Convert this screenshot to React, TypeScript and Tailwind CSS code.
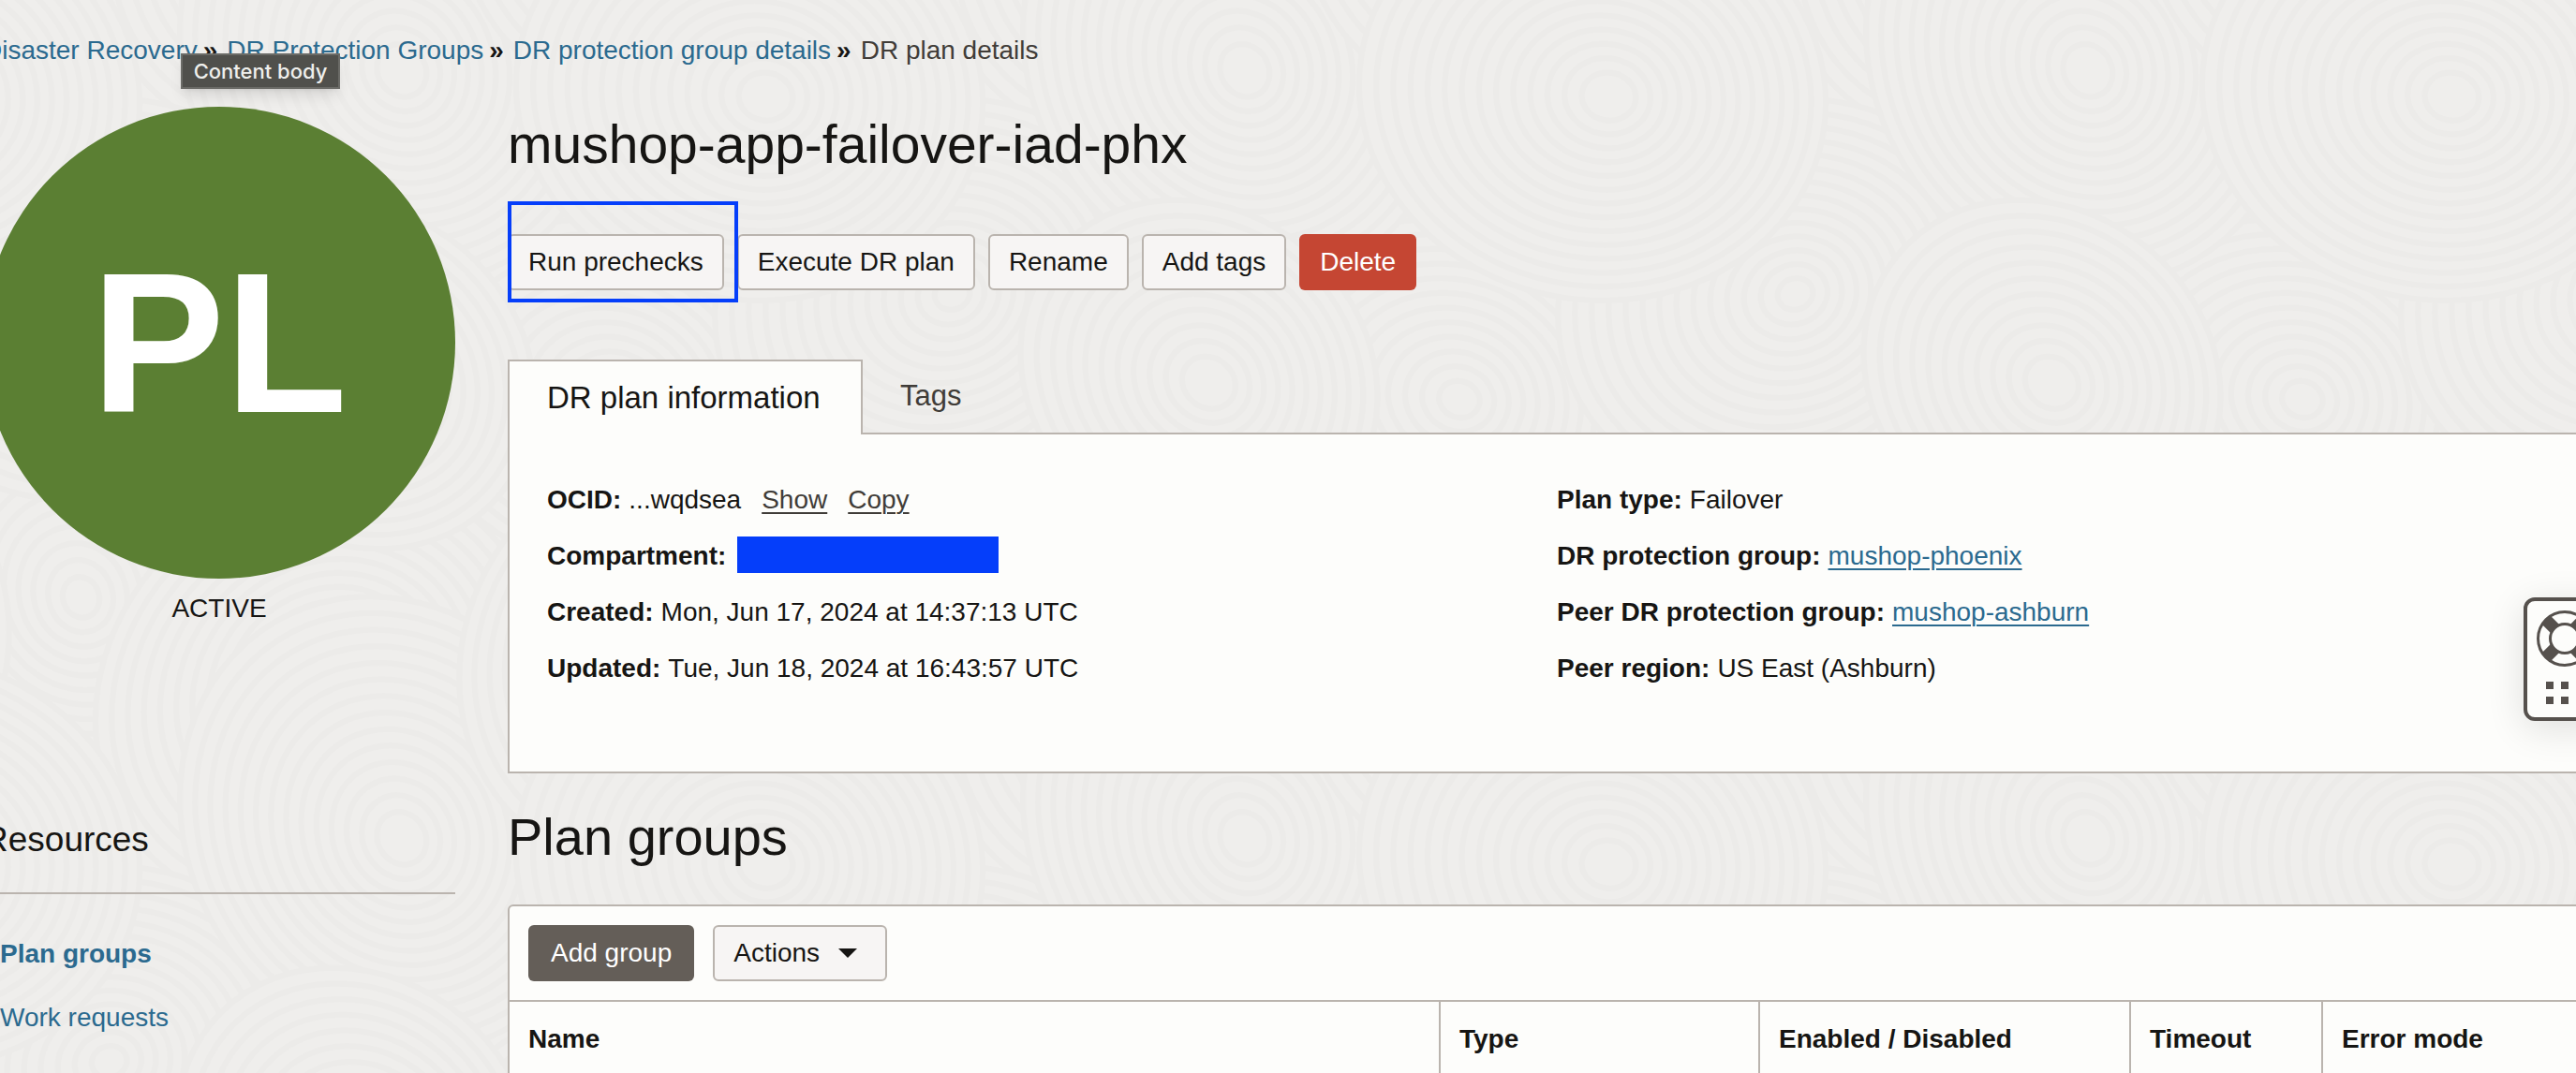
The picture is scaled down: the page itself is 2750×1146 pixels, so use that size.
import type { ReactNode } from "react";

const TILE_W = 900;
const TILE_H = 820;

/* Discs of concentric rings; later discs overlap the earlier ones. */
const discs = [
  { x: 80, y: 620, r: 260, tilt: 70 },
  { x: 640, y: 420, r: 260, tilt: 20 },
  { x: 340, y: 740, r: 250, tilt: -40 },
  { x: 100, y: 320, r: 240, tilt: -20 },
  { x: 420, y: 60, r: 250, tilt: 60 },
  { x: 700, y: 700, r: 230, tilt: -60 },
  { x: 380, y: 400, r: 200, tilt: 40 },
  { x: 800, y: 100, r: 250, tilt: 10 },
];
const wraps = [-1, 0, 1];

function Texture() {
  return (
    <svg className="absolute inset-0 -z-10 h-full w-full" aria-hidden="true">
      <defs>
        <pattern id="swirls" width={TILE_W} height={TILE_H} patternUnits="userSpaceOnUse">
          {discs.map((d) =>
            wraps.flatMap((i) =>
              wraps.map((j) => (
                <g
                  key={`${d.x}-${d.y}-${i}-${j}`}
                  transform={`translate(${d.x + i * TILE_W} ${d.y + j * TILE_H}) rotate(${d.tilt})`}
                  stroke="#ecebe9"
                  strokeWidth="6"
                  fill="#efeeec"
                >
                  {Array.from({ length: Math.floor(d.r / 17) }, (_, k) => d.r - k * 17).map((r) => (
                    <ellipse key={r} rx={r} ry={r * 0.88} cx={(d.r - r) * 0.08} />
                  ))}
                </g>
              )),
            ),
          )}
        </pattern>
      </defs>
      <rect width="100%" height="100%" fill="url(#swirls)" />
    </svg>
  );
}

const crumbs = ["Disaster Recovery", "DR Protection Groups", "DR protection group details"];

function Breadcrumbs() {
  return (
    <nav aria-label="Breadcrumb" className="relative pt-[34px]">
      <ol className="flex items-center whitespace-nowrap leading-10">
        {crumbs.map((c) => (
          <li key={c} className="flex items-center">
            <a href="#" className="text-[#2b6a8f]">
              {c}
            </a>
            <span aria-hidden="true" className="mr-2.5 ml-1.5 leading-10 font-bold">
              »
            </span>
          </li>
        ))}
        <li aria-current="page" className="text-[#403c38]">
          DR plan details
        </li>
      </ol>
      <div
        role="tooltip"
        className="absolute top-[57px] left-[211px] flex h-[38px] w-[170px] items-center justify-center border-2 border-[#6b6b67] bg-[#50504c] font-['Inter',sans-serif] text-[22px] font-medium text-[#efefec] shadow-lg"
      >
        Content body
      </div>
    </nav>
  );
}

function Button({ children }: { children: ReactNode }) {
  return (
    <button
      type="button"
      className="flex h-[60px] items-center rounded-md border-2 border-[#bab4ae] bg-[#f7f5f4] px-5"
    >
      {children}
    </button>
  );
}

function Row({ label, children }: { label: string; children?: ReactNode }) {
  return (
    <div className="flex items-center gap-2 whitespace-nowrap">
      <dt className="font-bold">{label}:</dt>
      <dd className="flex items-center">{children}</dd>
    </div>
  );
}

const linkClass = "text-[#2b6a8f] underline decoration-2 underline-offset-4";
const greyLinkClass = "ml-[22px] text-[#403c38] underline decoration-2 underline-offset-4";

function Sidebar() {
  return (
    <aside className="w-[504px] shrink-0">
      <div className="flex aspect-square items-center justify-center rounded-full bg-[#5b7f33] text-[214px] leading-none font-bold text-white">
        PL
      </div>
      <p className="mt-3 text-center leading-10">ACTIVE</p>
      <h2 className="mt-[203px] border-b-2 border-[#bab4ae] pb-8 text-[37px] leading-[48px]">
        Resources
      </h2>
      <ul className="mt-[30px] pl-[18px] leading-[68px] text-[#2b6a8f]">
        <li>
          <a href="#" className="font-bold">
            Plan groups
          </a>
        </li>
        <li>
          <a href="#">Work requests</a>
        </li>
      </ul>
    </aside>
  );
}

function PlanPanel() {
  return (
    <section className="mt-[74px]">
      <div role="tablist" className="relative flex">
        <button
          type="button"
          role="tab"
          aria-selected="true"
          className="-mb-0.5 flex h-20 w-[379px] items-center border-2 border-b-0 border-[#bab4ae] bg-[#fdfdfb] px-10 text-[33px] whitespace-nowrap"
        >
          DR plan information
        </button>
        <button
          type="button"
          role="tab"
          aria-selected="false"
          className="flex h-[78px] items-center px-10 text-[31px] text-[#403c38]"
        >
          Tags
        </button>
      </div>
      <div className="grid grid-cols-2 border-2 border-[#bab4ae] bg-[#fdfdfb] px-10 pt-10 pb-20 leading-[60px]">
        <dl>
          <Row label="OCID">
            ...wqdsea
            <a href="#" className={greyLinkClass}>
              Show
            </a>
            <a href="#" className={greyLinkClass}>
              Copy
            </a>
          </Row>
          <Row label="Compartment">
            <span className="mb-1 ml-1 h-[39px] w-[279px] bg-[#053efa]" />
          </Row>
          <Row label="Created">Mon, Jun 17, 2024 at 14:37:13 UTC</Row>
          <Row label="Updated">Tue, Jun 18, 2024 at 16:43:57 UTC</Row>
        </dl>
        <dl>
          <Row label="Plan type">Failover</Row>
          <Row label="DR protection group">
            <a href="#" className={linkClass}>
              mushop-phoenix
            </a>
          </Row>
          <Row label="Peer DR protection group">
            <a href="#" className={linkClass}>
              mushop-ashburn
            </a>
          </Row>
          <Row label="Peer region">US East (Ashburn)</Row>
        </dl>
      </div>
    </section>
  );
}

const thClass = "border-l-2 border-[#bab4ae] px-5 pt-5 pb-4 text-left font-bold whitespace-nowrap";

function GroupsTable() {
  return (
    <div className="mt-10 rounded-t-md border-2 border-b-0 border-[#bab4ae] bg-[#fdfdfb]">
      <div className="flex gap-5 border-b-2 border-[#bab4ae] p-5">
        <button type="button" className="flex h-[60px] items-center rounded-md bg-[#645e58] px-6 text-white">
          Add group
        </button>
        <button
          type="button"
          className="flex h-[60px] items-center gap-5 rounded-md border-2 border-[#bab4ae] bg-[#f7f5f4] pr-[30px] pl-5"
        >
          Actions
          <svg viewBox="0 0 20 10" className="h-2.5 w-5" aria-hidden="true">
            <path d="M0 0h20L10 10z" fill="#161513" />
          </svg>
        </button>
      </div>
      <table className="w-full table-fixed leading-10">
        <colgroup>
          <col />
          <col className="w-[341px]" />
          <col className="w-[396px]" />
          <col className="w-[205px]" />
          <col className="w-[301px]" />
        </colgroup>
        <thead>
          <tr>
            <th scope="col" className="px-5 pt-5 pb-4 text-left font-bold">
              Name
            </th>
            <th scope="col" className={thClass}>Type</th>
            <th scope="col" className={thClass}>Enabled / Disabled</th>
            <th scope="col" className={thClass}>Timeout</th>
            <th scope="col" className={thClass}>Error mode</th>
          </tr>
        </thead>
      </table>
    </div>
  );
}

function HelpWidget() {
  return (
    <button
      type="button"
      aria-label="Help"
      className="absolute top-[638px] -right-8 flex h-[132px] w-[88px] flex-col items-center gap-4 rounded-xl border-4 border-[#56514d] bg-[#fdfdfb] pt-2.5 shadow-[0_8px_40px_rgba(0,0,0,0.12)]"
    >
      <svg viewBox="0 0 60 60" className="h-[60px] w-[60px]" fill="none" aria-hidden="true">
        <g stroke="#56514d">
          <path d="M10 10l10 10M50 10l-10 10M10 50l10-10M50 50l-10-10" strokeWidth="13" />
          <circle cx="30" cy="30" r="28.5" strokeWidth="3" />
          <circle cx="30" cy="30" r="15.5" strokeWidth="3" fill="#fdfdfb" />
        </g>
      </svg>
      <svg viewBox="0 0 40 24" className="h-6 w-10" fill="#56514d" aria-hidden="true">
        <path d="M0 0h8v8H0zM16 0h8v8h-8zM32 0h8v8h-8zM0 16h8v8H0zM16 16h8v8h-8zM32 16h8v8h-8z" />
      </svg>
    </button>
  );
}

export default function App() {
  return (
    <div className="relative isolate min-h-screen overflow-hidden bg-[#efeeec] font-['Liberation_Sans',Arial,sans-serif] text-[28px] text-[#161513]">
      <Texture />
      <div className="-mr-8 -ml-[18px]">
        <Breadcrumbs />
        <div className="mt-10 flex gap-14">
          <Sidebar />
          <main className="min-w-0 flex-1 pt-2">
            <h1 className="text-[57px] leading-16">mushop-app-failover-iad-phx</h1>
            <div className="relative mt-16 flex gap-3.5">
              <Button>Run prechecks</Button>
              <Button>Execute DR plan</Button>
              <Button>Rename</Button>
              <Button>Add tags</Button>
              <button type="button" className="flex h-[60px] items-center rounded-md bg-[#c54633] px-[22px] text-white">
                Delete
              </button>
              <div className="pointer-events-none absolute -top-[35px] left-0 h-[108px] w-[246px] border-4 border-[#053efa]" />
            </div>
            <PlanPanel />
            <h2 className="mt-9 text-[56px] leading-16">Plan groups</h2>
            <GroupsTable />
          </main>
        </div>
      </div>
      <HelpWidget />
    </div>
  );
}
